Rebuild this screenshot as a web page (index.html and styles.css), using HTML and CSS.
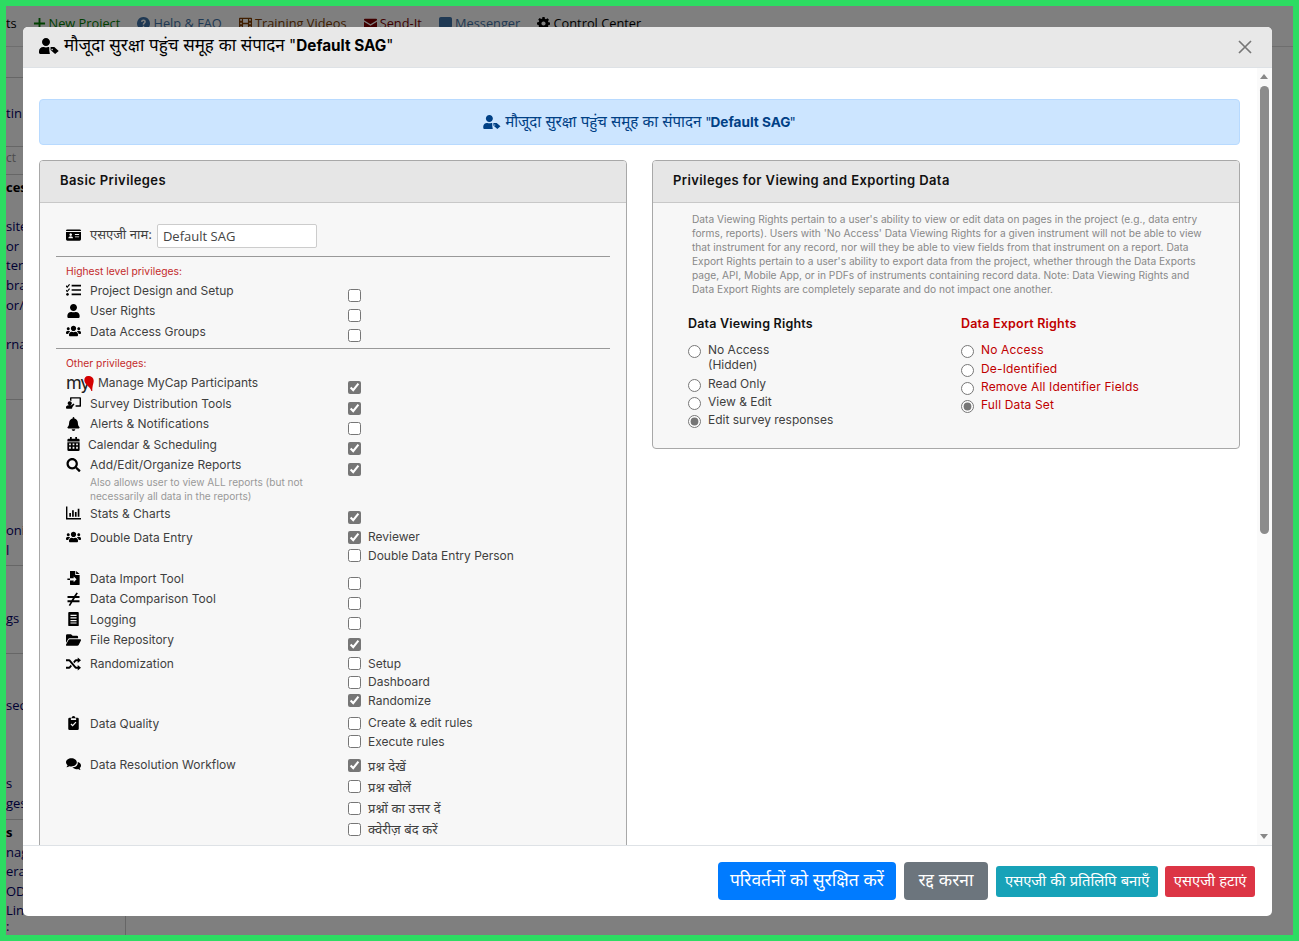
FILE: index.html
```html
<!DOCTYPE html>
<html lang="hi">
  <head>
    <meta charset="UTF-8" />
    <title>Default SAG</title>
    <link rel="stylesheet" href="styles.css">
  </head>
  <body>
    <!-- Icon sprite -->
    <svg class="sprite" xmlns="http://www.w3.org/2000/svg">
      <symbol id="i-user" viewBox="0 0 448 512"><path d="M224 256c70.7 0 128-57.3 128-128S294.7 0 224 0 96 57.3 96 128s57.3 128 128 128zm89.6 32h-16.7c-22.2 10.2-46.9 16-72.9 16s-50.6-5.8-72.9-16h-16.7C60.2 288 0 348.2 0 422.4V464c0 26.5 21.5 48 48 48h352c26.5 0 48-21.500 48-48v-41.600c0-74.200-60.200-134.400-134.400-134.400z"/></symbol>
      <symbol id="i-user-tag" viewBox="0 0 640 512"><path d="M224 256c70.7 0 128-57.3 128-128S294.7 0 224 0 96 57.3 96 128s57.3 128 128 128zm89.6 32h-16.7c-22.2 10.2-46.9 16-72.9 16s-50.6-5.8-72.9-16h-16.7C60.2 288 0 348.2 0 422.4V464c0 26.5 21.5 48 48 48h300L330 400V300z"/><path d="M370 290h120l140 125-115 97-145-130zM420 345a22 22 0 1 0 .1 0z" fill-rule="evenodd"/></symbol>
      <symbol id="i-users" viewBox="0 0 640 512"><path d="M96 224c35.3 0 64-28.7 64-64s-28.7-64-64-64-64 28.7-64 64 28.7 64 64 64zm448 0c35.3 0 64-28.7 64-64s-28.7-64-64-64-64 28.7-64 64 28.7 64 64 64zm32 32h-64c-17.6 0-33.5 7.1-45.1 18.6 40.3 22.1 68.9 62 75.1 109.4h66c17.7 0 32-14.3 32-32v-32c0-35.3-28.7-64-64-64zm-256 0c61.9 0 112-50.1 112-112S381.9 32 320 32 208 82.1 208 144s50.1 112 112 112zm76.8 32h-8.3c-20.8 10-43.9 16-68.5 16s-47.6-6-68.5-16h-8.3C179.6 288 128 339.6 128 403.2V432c0 26.5 21.5 48 48 48h288c26.5 0 48-21.5 48-48v-28.8c0-63.6-51.6-115.2-115.2-115.2zm-223.7-13.4C161.5 263.1 145.6 256 128 256H64c-35.3 0-64 28.7-64 64v32c0 17.7 14.3 32 32 32h65.9c6.3-47.4 34.9-87.3 75.2-109.4z"/></symbol>
      <symbol id="i-bell" viewBox="0 0 448 512"><path d="M224 512c35.32 0 63.97-28.65 63.97-64H160.03c0 35.35 28.65 64 63.97 64zm215.39-149.71c-19.32-20.76-55.47-51.99-55.47-154.29 0-77.7-54.48-139.9-127.94-155.16V32c0-17.67-14.32-32-31.98-32s-31.98 14.33-31.98 32v20.84C118.56 68.1 64.08 130.3 64.08 208c0 102.3-36.15 133.53-55.47 154.29-6 6.45-8.66 14.16-8.61 21.71.11 16.4 12.98 32 32.1 32h383.8c19.12 0 32-15.6 32.1-32 .05-7.55-2.61-15.27-8.61-21.71z"/></symbol>
      <symbol id="i-search" viewBox="0 0 512 512"><path d="M505 442.7L405.3 343c-4.5-4.5-10.6-7-17-7H372c27.6-35.3 44-79.7 44-128C416 93.1 322.9 0 208 0S0 93.1 0 208s93.1 208 208 208c48.3 0 92.7-16.4 128-44v16.3c0 6.4 2.5 12.5 7 17l99.7 99.7c9.4 9.4 24.6 9.4 33.9 0l28.3-28.3c9.4-9.4 9.4-24.6.1-34zM208 336c-70.7 0-128-57.2-128-128 0-70.7 57.2-128 128-128 70.7 0 128 57.2 128 128 0 70.7-57.2 128-128 128z"/></symbol>
      <symbol id="i-idcard" viewBox="0 0 16 14"><path fill-rule="evenodd" d="M1.5 1h13A1.5 1.5 0 0 1 16 2.500v9a1.500 1.500 0 0 1-1.500 1.500h-13A1.500 1.500 0 0 1 0 11.500v-9A1.500 1.500 0 0 1 1.500 1zM0 3.800h16V2.800H0zM5 5.200a1.400 1.400 0 1 0 .01 0zM2.500 10.500h5c0-1.600-1-2.300-2.500-2.300s-2.500.7-2.500 2.300zM9.500 6v1h4.500V6zM9.500 8.500v1h4.500v-1z"/></symbol>
      <symbol id="i-tasks" viewBox="0 0 16 14"><path d="M6 1.500h10v1.800H6zM6 6.100h10v1.800H6zM6 10.700h10v1.800H6zM.3 2l1 1.100L3.300.5l1 .8-3 3.500L-.6 2.900zM.3 6.600l1 1.100 2-2.600 1 .8-3 3.500-1.900-1.900zM1.600 10.200a1.500 1.500 0 1 1-.01 0z"/></symbol>
      <symbol id="i-teacher" viewBox="0 0 18 14"><path d="M5.600 0H17a1 1 0 0 1 1 1v9.500a1 1 0 0 1-1 1h-5.500v-1.700h4.800V1.700H6.500V4.500a4 4 0 0 0-1.700-.5V1a1 1 0 0 1 .8-1z"/><path d="M4.500 4.800a2.500 2.500 0 1 1-.01 0zM2.800 9.800h3.700l2.500-2.300 1.200 1.100L7.500 12V13a1 1 0 0 1-1 1H1a1 1 0 0 1-1-1v-.5c0-1.500 1.200-2.700 2.800-2.700z"/></symbol>
      <symbol id="i-calendar" viewBox="0 0 14 16"><path fill-rule="evenodd" d="M3 0h2v2h4V0h2v2h1.500A1.500 1.500 0 0 1 14 3.500V5H0V3.500A1.500 1.500 0 0 1 1.500 2H3zM0 6h14v8.500a1.500 1.500 0 0 1-1.500 1.500h-11A1.500 1.500 0 0 1 0 14.500zM2 7.500v2h2v-2zM6 7.500v2h2v-2zM10 7.500v2h2v-2zM2 11v2.500h2V11zM6 11v2.500h2V11zM10 11v2.500h2V11z"/></symbol>
      <symbol id="i-chart" viewBox="0 0 16 14"><path d="M0 0h1.500v12.300H16V14H0zM3.500 7h1.800v4H3.500zM6.500 4h1.800v7H6.500zM9.500 6h1.800v5H9.500zM12.500 2.500h1.800V11h-1.800z"/></symbol>
      <symbol id="i-import" viewBox="0 0 14 16"><path d="M3 0h6v4.500h5V15a1 1 0 0 1-1 1H4a1 1 0 0 1-1-1v-4.200h4.200v2l3.300-3.300-3.300-3.300v2H3z"/><path d="M10 0l4 3.500h-4zM0 8.700h3v1.500H0z"/></symbol>
      <symbol id="i-noteq" viewBox="0 0 14 14"><path d="M10 .5l1.400.8L9.700 4H13v2H8.500l-1.400 2.300H13v2H5.900l-2.300 3.700-1.400-.8 1.800-2.900H1v-2h3.900l1.500-2.300H1V4h6.500z"/></symbol>
      <symbol id="i-receipt" viewBox="0 0 12 16"><path fill-rule="evenodd" d="M1 0h10a1 1 0 0 1 1 1v14a1 1 0 0 1-1 1H1a1 1 0 0 1-1-1V1a1 1 0 0 1 1-1zM2.500 3v1.500h7V3zM2.500 6v1.500h7V6zM2.500 9v1.500h7V9zM2.500 12v1.200h7V12z"/></symbol>
      <symbol id="i-folder" viewBox="0 0 18 14"><path d="M0 1.500A1.500 1.500 0 0 1 1.500 0h4.500l2 2h5a1.500 1.500 0 0 1 1.500 1.500V5H4.500a2.500 2.500 0 0 0-2.200 1.300L0 10.500z"/><path d="M4.500 6H17a1 1 0 0 1 .9 1.500l-2.700 5.500a2 2 0 0 1-1.700 1H1a1 1 0 0 1-.9-1.500L3 7a2 2 0 0 1 1.500-1z"/></symbol>
      <symbol id="i-random" viewBox="0 0 16 14"><path d="M12.500 0L16 3l-3.500 3V4h-1.700L8.900 6.300l-1.200-1.600L9.500 2.500a1.200 1.200 0 0 1 1-.5h2zM0 2h3.500a1.200 1.200 0 0 1 1 .5L10.800 10h1.700V8l3.500 3-3.500 3v-2h-2a1.200 1.200 0 0 1-1-.5L3.200 4H0zM5.100 7.700l1.200 1.600-1.800 2.200a1.200 1.200 0 0 1-1 .5H0v-2h3.200z"/></symbol>
      <symbol id="i-clip" viewBox="0 0 12 16"><path fill-rule="evenodd" d="M6 0a2 2 0 0 1 2 2h2.500A1.500 1.500 0 0 1 12 3.500v11a1.500 1.500 0 0 1-1.500 1.500h-9A1.500 1.500 0 0 1 0 14.500v-11A1.500 1.500 0 0 1 1.500 2H4a2 2 0 0 1 2-2zM3 2.500V4.500h6V2.500zM9.300 7.500l-1-.9L5 10l-1.400-1.400-1 1L5 12z"/></symbol>
      <symbol id="i-comments" viewBox="0 0 18 14"><path d="M6.500 0C10.100 0 13 2.200 13 5s-2.900 5-6.500 5c-.9 0-1.700-.1-2.500-.4C3 10.500 1.700 11 .4 11c.8-.8 1.300-1.700 1.500-2.600C.7 7.500 0 6.300 0 5c0-2.800 2.900-5 6.500-5z"/><path d="M14 4.600c2.300.5 4 2.200 4 4.200 0 1.200-.6 2.300-1.600 3 .2.800.6 1.500 1.200 2.200-1.100 0-2.200-.4-3-1.100-.7.200-1.300.3-2 .3-2 0-3.800-.8-4.900-2.200 4.100-.1 7-2.700 6.300-6.400z"/></symbol>
      <symbol id="i-plus" viewBox="0 0 14 14"><path d="M6 1h2v5h5v2H8v5H6V8H1V6h5z"/></symbol>
      <symbol id="i-help" viewBox="0 0 14 14"><path fill-rule="evenodd" d="M7 0a7 7 0 1 1-.01 0zM7 2.800C5.500 2.800 4.500 3.600 4.300 5l1.500.3c.1-.6.500-1 1.100-1 .6 0 1 .3 1 .8 0 .9-1.700 1-1.700 2.800v.4h1.500c0-1.300 1.800-1.400 1.800-3.300 0-1.300-1-2.200-2.500-2.200zM6.200 9.500v1.600h1.600V9.500z"/></symbol>
      <symbol id="i-film" viewBox="0 0 16 14"><path fill-rule="evenodd" d="M1 0h14a1 1 0 0 1 1 1v12a1 1 0 0 1-1 1H1a1 1 0 0 1-1-1V1a1 1 0 0 1 1-1zM1.500 1.500v2h2v-2zM1.500 6v2h2V6zM1.500 10.500v2h2v-2zM12.500 1.500v2h2v-2zM12.500 6v2h2V6zM12.500 10.500v2h2v-2zM5 1.500v4.500h6V1.500zM5 8v4.500h6V8z"/></symbol>
      <symbol id="i-mail" viewBox="0 0 16 12"><path d="M1 0h14a1 1 0 0 1 1 1v1L8 7 0 2V1a1 1 0 0 1 1-1zM0 3.800l8 5 8-5V11a1 1 0 0 1-1 1H1a1 1 0 0 1-1-1z"/></symbol>
      <symbol id="i-msg" viewBox="0 0 14 14"><path d="M2 0h10a2 2 0 0 1 2 2v8a2 2 0 0 1-2 2H6l-3 2v-2H2a2 2 0 0 1-2-2V2a2 2 0 0 1 2-2z"/></symbol>
      <symbol id="i-gear" viewBox="0 0 14 14"><path fill-rule="evenodd" d="M5.800 0h2.400l.3 1.900 1.200.5 1.600-1.100 1.600 1.600-1.100 1.600.5 1.200 1.900.3v2.400l-1.900.3-.5 1.200 1.100 1.600-1.600 1.600-1.600-1.100-1.200.5-.3 1.900H5.800l-.3-1.900-1.200-.5-1.600 1.100-1.600-1.600 1.100-1.600-.5-1.200L0 8.200V5.800l1.900-.3.5-1.200-1.100-1.600 1.600-1.600 1.600 1.100 1.200-.5zM7 4.800a2.200 2.200 0 1 0 .01 0z"/></symbol>
    </svg>

    <div class="frame">
      <!-- Page behind the dialog -->
      <div class="topbar">
        <span class="top-cut">ts</span>
        <a class="top-link link-green"><svg class="top-ic"><use href="#i-plus"/></svg>New Project</a>
        <a class="top-link link-blue"><svg class="top-ic"><use href="#i-help"/></svg>Help &amp; FAQ</a>
        <a class="top-link link-brown"><svg class="top-ic"><use href="#i-film"/></svg>Training Videos</a>
        <a class="top-link link-maroon"><svg class="top-ic"><use href="#i-mail"/></svg>Send-It</a>
        <a class="top-link link-navy"><svg class="top-ic"><use href="#i-msg"/></svg>Messenger</a>
        <a class="top-link link-black"><svg class="top-ic"><use href="#i-gear"/></svg>Control Center</a>
      </div>
      <div class="side">
        <div class="side-sec sec-a"></div>
        <div class="side-sec sec-b">tin</div>
        <div class="side-sec sec-c">ct</div>
        <div class="side-sec sec-d"><b>ces</b><br><br>site<br>or<br>ter<br>bra<br>or/U<br><br>rna</div>
        <div class="side-sec sec-e">oni<br>l</div>
        <div class="side-sec sec-f">gs</div>
        <div class="side-sec sec-g">sec<br><br><br><br>s<br>ges</div>
        <div class="side-sec sec-h"><b>s</b><br>nag<br>era<br>ODF<br>Lin<div class="side-last">:</div></div>
      </div>
      <div class="backdrop"></div>

      <!-- Dialog -->
      <div class="modal">
        <div class="modal-head">
          <svg class="head-ic"><use href="#i-user-tag"/></svg>
          <span class="head-title"><span class="hi">मौजूदा सुरक्षा पहुंच समूह का संपादन</span> "<b>Default SAG</b>"</span>
          <svg class="close-x" viewBox="0 0 14 14"><path d="M1 1l12 12M13 1L1 13"/></svg>
        </div>

        <div class="modal-body">
          <div class="alert">
            <svg class="alert-ic"><use href="#i-user-tag"/></svg>
            <span class="alert-text"><span class="hi">मौजूदा सुरक्षा पहुंच समूह का संपादन</span> "<b>Default SAG</b>"</span>
          </div>

          <div class="cols">
            <!-- Basic privileges -->
            <div class="panel">
              <div class="panel-head">Basic Privileges</div>
              <div class="panel-body basic">
                <div class="name-row">
                  <svg class="ic"><use href="#i-idcard"/></svg>
                  <span class="name-label">एसएजी नाम:</span>
                  <input class="name-input" type="text" value="Default SAG">
                </div>
                <div class="group-title">Highest level privileges:</div>

                <div class="row">
                  <div class="row-label"><svg class="ic"><use href="#i-tasks"/></svg>Project Design and Setup</div>
                  <input class="cb" type="checkbox">
                </div>
                <div class="row">
                  <div class="row-label"><svg class="ic"><use href="#i-user"/></svg>User Rights</div>
                  <input class="cb" type="checkbox">
                </div>
                <div class="row">
                  <div class="row-label"><svg class="ic"><use href="#i-users"/></svg>Data Access Groups</div>
                  <input class="cb" type="checkbox">
                </div>

                <div class="group-title second">Other privileges:</div>

                <div class="row">
                  <div class="row-label"><span class="mycap">my<svg class="mycap-pin" viewBox="0 0 10 16"><path d="M4 0c3.500 0 6 2 6 5 0 3-1.500 5-1.500 11H7.500C7 12 0 9 0 4.500 0 2 1.500 0 4 0z"/></svg></span>Manage MyCap Participants</div>
                  <input class="cb" type="checkbox" checked>
                </div>
                <div class="row">
                  <div class="row-label"><svg class="ic"><use href="#i-teacher"/></svg>Survey Distribution Tools</div>
                  <input class="cb" type="checkbox" checked>
                </div>
                <div class="row">
                  <div class="row-label"><svg class="ic"><use href="#i-bell"/></svg>Alerts &amp; Notifications</div>
                  <input class="cb" type="checkbox">
                </div>
                <div class="row">
                  <div class="row-label tight"><svg class="ic"><use href="#i-calendar"/></svg>Calendar &amp; Scheduling</div>
                  <input class="cb" type="checkbox" checked>
                </div>
                <div class="row row-note">
                  <div class="row-label"><svg class="ic"><use href="#i-search"/></svg>Add/Edit/Organize Reports</div>
                  <input class="cb" type="checkbox" checked>
                  <div class="note">Also allows user to view ALL reports (but not necessarily all data in the reports)</div>
                </div>
                <div class="row">
                  <div class="row-label"><svg class="ic"><use href="#i-chart"/></svg>Stats &amp; Charts</div>
                  <input class="cb" type="checkbox" checked>
                </div>

                <div class="row-multi">
                  <div class="row-label"><svg class="ic"><use href="#i-users"/></svg>Double Data Entry</div>
                  <div class="opts">
                    <label class="opt"><input class="cb" type="checkbox" checked>Reviewer</label>
                    <label class="opt"><input class="cb" type="checkbox">Double Data Entry Person</label>
                  </div>
                </div>

                <div class="row">
                  <div class="row-label"><svg class="ic"><use href="#i-import"/></svg>Data Import Tool</div>
                  <input class="cb" type="checkbox">
                </div>
                <div class="row">
                  <div class="row-label"><svg class="ic"><use href="#i-noteq"/></svg>Data Comparison Tool</div>
                  <input class="cb" type="checkbox">
                </div>
                <div class="row">
                  <div class="row-label"><svg class="ic"><use href="#i-receipt"/></svg>Logging</div>
                  <input class="cb" type="checkbox">
                </div>
                <div class="row">
                  <div class="row-label"><svg class="ic"><use href="#i-folder"/></svg>File Repository</div>
                  <input class="cb" type="checkbox" checked>
                </div>

                <div class="row-multi">
                  <div class="row-label"><svg class="ic"><use href="#i-random"/></svg>Randomization</div>
                  <div class="opts">
                    <label class="opt"><input class="cb" type="checkbox">Setup</label>
                    <label class="opt"><input class="cb" type="checkbox">Dashboard</label>
                    <label class="opt"><input class="cb" type="checkbox" checked>Randomize</label>
                  </div>
                </div>
                <div class="row-multi">
                  <div class="row-label"><svg class="ic"><use href="#i-clip"/></svg>Data Quality</div>
                  <div class="opts">
                    <label class="opt"><input class="cb" type="checkbox">Create &amp; edit rules</label>
                    <label class="opt"><input class="cb" type="checkbox">Execute rules</label>
                  </div>
                </div>
                <div class="row-multi">
                  <div class="row-label"><svg class="ic"><use href="#i-comments"/></svg>Data Resolution Workflow</div>
                  <div class="opts opts-hi">
                    <label class="opt"><input class="cb" type="checkbox" checked>प्रश्न देखें</label>
                    <label class="opt"><input class="cb" type="checkbox">प्रश्न खोलें</label>
                    <label class="opt"><input class="cb" type="checkbox">प्रश्नों का उत्तर दें</label>
                    <label class="opt"><input class="cb" type="checkbox">क्वेरीज़ बंद करें</label>
                  </div>
                </div>
              </div>
            </div>

            <!-- Viewing and export rights -->
            <div class="panel panel-short">
              <div class="panel-head">Privileges for Viewing and Exporting Data</div>
              <div class="panel-body rights">
                <p class="rights-text">Data Viewing Rights pertain to a user's ability to view or edit data on pages in the project (e.g., data entry forms, reports). Users with 'No Access' Data Viewing Rights for a given instrument will not be able to view that instrument for any record, nor will they be able to view fields from that instrument on a report. Data Export Rights pertain to a user's ability to export data from the project, whether through the Data Exports page, API, Mobile App, or in PDFs of instruments containing record data. Note: Data Viewing Rights and Data Export Rights are completely separate and do not impact one another.</p>
                <div class="rights-cols">
                  <div class="rights-col view">
                    <div class="rights-title">Data Viewing Rights</div>
                    <label class="radio"><input type="radio" name="view"><span>No Access<br>(Hidden)</span></label>
                    <label class="radio"><input type="radio" name="view"><span>Read Only</span></label>
                    <label class="radio"><input type="radio" name="view"><span>View &amp; Edit</span></label>
                    <label class="radio"><input type="radio" name="view" checked><span>Edit survey responses</span></label>
                  </div>
                  <div class="rights-col export">
                    <div class="rights-title">Data Export Rights</div>
                    <label class="radio"><input type="radio" name="exp"><span>No Access</span></label>
                    <label class="radio"><input type="radio" name="exp"><span>De-Identified</span></label>
                    <label class="radio"><input type="radio" name="exp"><span>Remove All Identifier Fields</span></label>
                    <label class="radio"><input type="radio" name="exp" checked><span>Full Data Set</span></label>
                  </div>
                </div>
              </div>
            </div>
          </div>

          <!-- Scrollbar -->
          <div class="scroll-track">
            <div class="arrow-up"></div>
            <div class="scroll-thumb"></div>
            <div class="arrow-down"></div>
          </div>
        </div>

        <div class="modal-foot">
          <button class="btn btn-lg btn-blue">परिवर्तनों को सुरक्षित करें</button>
          <button class="btn btn-lg btn-grey">रद्द करना</button>
          <button class="btn btn-teal">एसएजी की प्रतिलिपि बनाएँ</button>
          <button class="btn btn-red">एसएजी हटाएं</button>
        </div>
      </div>
    </div>
  </body>
</html>
```

FILE: styles.css
```css
body {
  margin: 0;
  font-family: Inter, "Noto Sans", sans-serif;
}

.sprite {
  display: none;
}

.frame {
  position: relative;
  box-sizing: border-box;
  width: 1299px;
  height: 941px;
  border: 6px solid #2ddc62;
  background-color: #fff;
  overflow: hidden;
}

/* Page behind the dialog */
.topbar {
  display: flex;
  align-items: flex-start;
  height: 32px;
  padding-top: 8px;
  border-bottom: 1px solid #ddd;
  font-family: "Open Sans", sans-serif;
  font-size: 12.8px;
  line-height: 18px;
}

.top-cut {
  width: 26.500px;
  color: #000;
}

.top-link {
  display: flex;
  align-items: center;
  margin-right: 17.200px;
}

.top-ic {
  width: 13px;
  height: 13px;
  margin-right: 3px;
  fill: currentColor;
}

.link-green { color: #008000; }
.link-blue { color: #3e72a8; }
.link-brown { color: #803c00; }
.link-maroon { color: #800000; }
.link-navy { color: #3e72a8; }
.link-black { color: #000; }

.side {
  width: 119px;
  height: 888px;
  border-right: 1px solid #ccc;
  font-family: "Open Sans", sans-serif;
  font-size: 13px;
  line-height: 19.6px;
  color: #000066;
  overflow: hidden;
}

.side-sec {
  box-sizing: border-box;
  border-bottom: 1px solid #ccc;
}

.side-sec b { color: #000; }

.sec-a { height: 31px; }
.sec-b { height: 69px; padding-top: 26px; }
.sec-c { height: 28px; padding-top: 1px; color: #999; font-size: 12px; }
.sec-d { height: 225px; padding-top: 3px; }
.sec-e { height: 166px; padding-top: 121px; }
.sec-f { height: 88px; padding-top: 43px; }
.sec-g { height: 166px; padding-top: 42px; }
.sec-h { height: 115px; padding-top: 3px; border-bottom: 0; }

.side-last {
  line-height: 10px;
}

.backdrop {
  position: absolute;
  inset: 0;
  background-color: rgba(0, 0, 0, 0.5);
}

/* Dialog */
.modal {
  position: absolute;
  left: 17px;
  top: 21px;
  box-sizing: border-box;
  width: 1249px;
  height: 889px;
  display: flex;
  flex-direction: column;
  background-color: #fff;
  border-radius: 5px;
  overflow: hidden;
  font-size: 12px;
  color: #3f3f3f;
}

.modal-head {
  display: flex;
  align-items: center;
  flex: none;
  box-sizing: border-box;
  height: 41px;
  padding: 0 20px 0 16px;
  background-color: #e8e8e8;
  border-bottom: 1px solid #dee2e6;
  color: #000;
}

.head-ic {
  width: 20px;
  height: 16px;
  margin-top: -2px;
  margin-right: 5px;
  fill: #000;
}

.head-title {
  flex: 1;
  font-size: 15.3px;
  margin-top: -6px;
}

.hi {
  font-size: 1.11em;
  font-weight: 400;
}

.close-x {
  width: 14px;
  height: 14px;
  fill: none;
  stroke: #777;
  stroke-width: 1.7;
}

.modal-body {
  position: relative;
  flex: 1;
  min-height: 0;
  padding: 31px 32px 0 16px;
  overflow: hidden;
}

.alert {
  display: flex;
  align-items: center;
  justify-content: center;
  box-sizing: border-box;
  height: 46px;
  margin-bottom: 15px;
  border: 1px solid #b8daff;
  border-radius: 4px;
  background-color: #cce5ff;
  color: #004085;
}

.alert-text {
  font-size: 13.6px;
  margin-top: -2px;
}

.alert-text b {
  margin: 0 -1px;
}

.alert-ic {
  width: 18px;
  height: 14px;
  margin-right: 4px;
  fill: #004085;
}

.cols {
  display: flex;
  align-items: flex-start;
  gap: 25px;
}

.panel {
  flex: 1;
  box-sizing: border-box;
  border: 1px solid #a8a8a8;
  border-radius: 4px;
  background-color: #f7f7f7;
  overflow: hidden;
}

.panel-head {
  box-sizing: border-box;
  height: 42px;
  padding: 0 20px;
  line-height: 38px;
  background-color: #e6e6e6;
  border-bottom: 1px solid #c8c8c8;
  font-size: 13px;
  font-weight: 600;
  letter-spacing: 0.4px;
  color: #111;
}

.panel-body.basic {
  padding: 21px 16px 20px 16px;
}

.ic {
  flex: none;
  width: 15px;
  height: 14px;
  margin-right: 9px;
  fill: #000;
}

.name-row {
  display: flex;
  align-items: center;
  height: 24px;
  padding-left: 10px;
}

.name-row .ic {
  margin-top: -2px;
}

.name-label {
  margin-top: -5px;
  margin-right: 5px;
  font-size: 13px;
}

.name-input {
  box-sizing: border-box;
  width: 160px;
  height: 24px;
  padding: 2px 5px;
  border: 1px solid #ccc;
  border-radius: 2px;
  font-family: "Open Sans", sans-serif;
  font-size: 13px;
  color: #444;
}

.group-title {
  margin-top: 8px;
  padding: 7px 0 3px 10px;
  border-top: 1px solid #999;
  font-size: 10.3px;
  line-height: 14px;
  color: #c42b2b;
}

.group-title.second {
  margin-top: 6px;
  padding-bottom: 3.500px;
}

.row {
  display: flex;
  flex-wrap: wrap;
  align-items: flex-start;
  height: 20.4px;
}

.row-note {
  height: 48.500px;
}

.row-label {
  display: flex;
  align-items: center;
  box-sizing: border-box;
  width: 292px;
  height: 18.600px;
  padding-left: 10px;
}

.row-label.tight .ic {
  margin-right: 7px;
}

.cb {
  flex: none;
  width: 13px;
  height: 13px;
  margin: 7.500px 0 0 0;
  accent-color: #767676;
}

.note {
  width: 230px;
  margin: -1.500px 0 0 34px;
  font-size: 10.1px;
  line-height: 14px;
  color: #999;
}

.row-multi {
  display: flex;
  margin: 4px 0;
}

.opts {
  display: flex;
  flex-direction: column;
}

.opt {
  display: flex;
  align-items: center;
  box-sizing: border-box;
  height: 18.500px;
  padding-bottom: 1.500px;
}

.opt .cb {
  margin: 1.500px 7px 0 0;
}

.opts-hi .opt {
  height: 21.200px;
  padding-bottom: 0;
  font-size: 13px;
}

.opts-hi .opt .cb {
  margin-top: 0;
}

.mycap {
  position: relative;
  width: 32px;
  font-size: 18px;
  line-height: 18px;
  color: #222;
  letter-spacing: -1.2px;
}

.mycap-pin {
  position: absolute;
  left: 18px;
  top: 2px;
  width: 10px;
  height: 15px;
  fill: #d40000;
}

.panel-body.rights {
  padding: 9px 34px 17.500px 35px;
}

.rights-text {
  margin: 0 0 0 4px;
  font-size: 10.2px;
  line-height: 14px;
  color: #888;
}

.rights-cols {
  display: flex;
  margin-top: 20px;
}

.rights-col.view {
  width: 273px;
}

.rights-title {
  margin-bottom: 11px;
  font-size: 12.5px;
  font-weight: 600;
  letter-spacing: 0.2px;
  color: #111;
}

.export,
.export .rights-title {
  color: #c00000;
}

.export {
  letter-spacing: 0.15px;
}

.radio {
  display: flex;
  align-items: flex-start;
  padding-bottom: 2px;
  line-height: 15px;
}

.export .rights-title + .radio {
  padding-bottom: 3px;
}

.view .rights-title + .radio {
  padding-bottom: 4px;
}

.radio input {
  width: 13px;
  height: 13px;
  margin: 3px 7px 0 0;
  accent-color: #767676;
}

/* Scrollbar */
.scroll-track {
  position: absolute;
  top: 0;
  right: 0;
  bottom: 0;
  width: 15px;
  background-color: #fafafa;
}

.arrow-up,
.arrow-down {
  position: absolute;
  left: 3px;
  width: 0;
  height: 0;
  border-left: 4px solid transparent;
  border-right: 4px solid transparent;
}

.arrow-up {
  top: 6px;
  border-bottom: 5px solid #888;
}

.arrow-down {
  bottom: 6px;
  border-top: 5px solid #888;
}

.scroll-thumb {
  position: absolute;
  top: 18px;
  left: 3px;
  width: 9px;
  height: 448px;
  border-radius: 5px;
  background-color: #8c8c8c;
}

.modal-foot {
  display: flex;
  align-items: center;
  justify-content: flex-end;
  flex: none;
  box-sizing: border-box;
  gap: 8px;
  height: 71px;
  padding-right: 17px;
  border-top: 1px solid #dee2e6;
}

.btn {
  height: 31px;
  padding: 0 9px 3px;
  border: 0;
  border-radius: 3px;
  color: #fff;
  font-family: Inter, "Noto Sans", sans-serif;
  font-size: 14.800px;
}

.btn-lg {
  height: 38px;
  padding: 0 12px 5px;
  border-radius: 4px;
  font-size: 17.400px;
}

.btn-grey {
  padding: 0 14.500px 5px;
}

.btn-red {
  margin-left: -1px;
  padding: 0 8.500px 3px;
}

.btn-blue { background-color: #007bff; }
.btn-grey { background-color: #6c757d; }
.btn-teal { background-color: #17a2b8; }
.btn-red { background-color: #dc3545; }
```
